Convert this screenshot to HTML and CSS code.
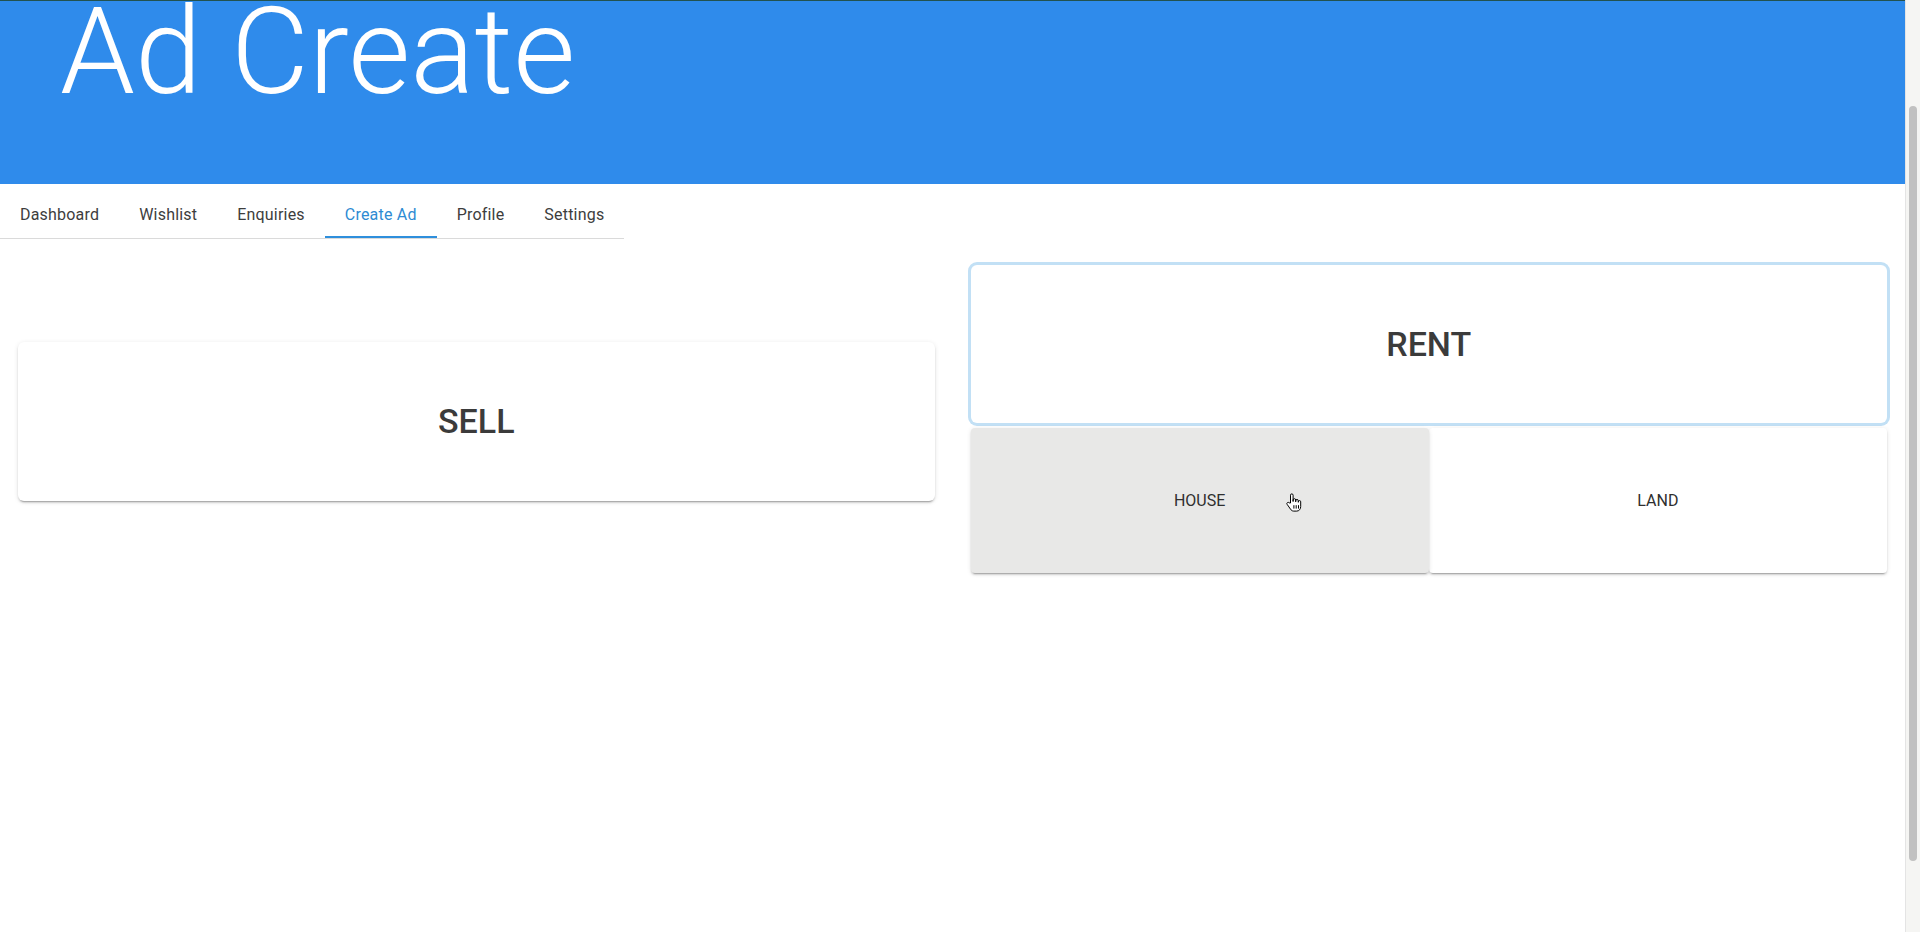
FILE: index.html
```html
<!DOCTYPE html>
<html lang="en">
<head>
<meta charset="utf-8">
<title>Ad Create</title>
<link rel="stylesheet" href="styles.css">
</head>
<body>
<div class="app">
  <div class="page">
    <header class="hero">
      <h1 class="hero-title">Ad Create</h1>
    </header>
    <nav class="tabs">
      <a class="tab">Dashboard</a>
      <a class="tab">Wishlist</a>
      <a class="tab">Enquiries</a>
      <a class="tab active">Create Ad</a>
      <a class="tab">Profile</a>
      <a class="tab">Settings</a>
    </nav>
    <main class="choices">
      <section class="col col-sell">
        <div class="card big">SELL</div>
      </section>
      <section class="col col-rent">
        <div class="card big rent">RENT</div>
        <div class="sub">
          <div class="card small hovered">HOUSE
            <svg class="cursor" width="17" height="19" viewBox="0 0 17 19">
              <path d="M5.5 10 V2.2 a1.3 1.3 0 0 1 2.6 0 V8.5 V7 a1.3 1.3 0 0 1 2.6 0 V8.8 V7.8 a1.3 1.3 0 0 1 2.6 0 V9.3 V8.8 a1.2 1.2 0 0 1 2.4 0 V13.5 c0 2.6 -1.6 4.6 -4 4.6 H8.7 c-1.5 0 -2.5 -0.9 -3.3 -2.1 L2.1 11.3 a1.2 1.2 0 0 1 2 -1.4 Z" fill="#fff" stroke="#000" stroke-width="1" stroke-linejoin="round"/>
              <path d="M8.9 12.2 V15.6 M11.2 12.2 V15.6 M13.5 12.2 V15.6" stroke="#000" stroke-width="1"/>
            </svg>
          </div>
          <div class="card small">LAND</div>
        </div>
      </section>
    </main>
  </div>
  <div class="scrollbar"><div class="thumb"></div></div>
</div>
</body>
</html>
```

FILE: styles.css
```css
html, body {
  margin: 0;
  height: 100%;
  overflow: hidden;
}

body {
  font-family: Roboto, "Liberation Sans", Arial, sans-serif;
  color: #333;
  background: #fff;
}

.app {
  display: flex;
  height: 932px;
}

.page {
  flex: 1;
  min-width: 0;
}

.hero {
  height: 184px;
  box-sizing: border-box;
  background: #2f8beb;
  border-top: 1px solid #22524e;
}

.hero-title {
  margin: 0;
  padding-left: 60px;
  font-size: 120px;
  font-weight: 300;
  line-height: 102px;
  color: #fff;
  white-space: nowrap;
}

.tabs {
  display: flex;
  width: fit-content;
  margin-top: 6px;
  border-bottom: 1px solid #dadada;
}

.tab {
  padding: 1px 20px 0;
  height: 47px;
  line-height: 47px;
  font-size: 16px;
  letter-spacing: 0.2px;
  color: #3d3d3d;
  cursor: pointer;
}

.tab.active {
  color: #2e8bd3;
  box-shadow: inset 0 -2px 0 #2e8fdc;
}

.choices {
  display: grid;
  grid-template-columns: 1fr 1fr;
  align-items: center;
  padding-top: 26px;
}

.col {
  padding: 0 18px;
}

.col-sell {
  padding-top: 4px;
}

.card {
  display: flex;
  align-items: center;
  justify-content: center;
  background: #fff;
  border-radius: 6px;
  box-shadow: 0 3px 1px -2px rgba(0, 0, 0, 0.2), 0 2px 2px 0 rgba(0, 0, 0, 0.12), 0 1px 5px 0 rgba(0, 0, 0, 0.1);
}

.big {
  height: 159px;
  font-size: 34px;
  font-weight: 500;
  color: #3b3b3b;
}

.rent {
  height: 158px;
  box-shadow: 0 0 0 3px #c2e0f5;
}

.sub {
  display: flex;
  margin-top: 5px;
}

.small {
  flex: 1;
  height: 145px;
  font-size: 16px;
  color: #2f2f2f;
  border-radius: 4px;
}

.hovered {
  position: relative;
  background: #e8e8e7;
}

.cursor {
  position: absolute;
  left: 314px;
  top: 65px;
}

.scrollbar {
  width: 15px;
  flex: none;
  box-sizing: border-box;
  background: #f5f5f3;
  border-left: 1px solid #e4e4e4;
  padding: 106px 3px 0 3px;
}

.thumb {
  height: 755px;
  background: #c1c1c1;
  border-radius: 4px;
}
```
